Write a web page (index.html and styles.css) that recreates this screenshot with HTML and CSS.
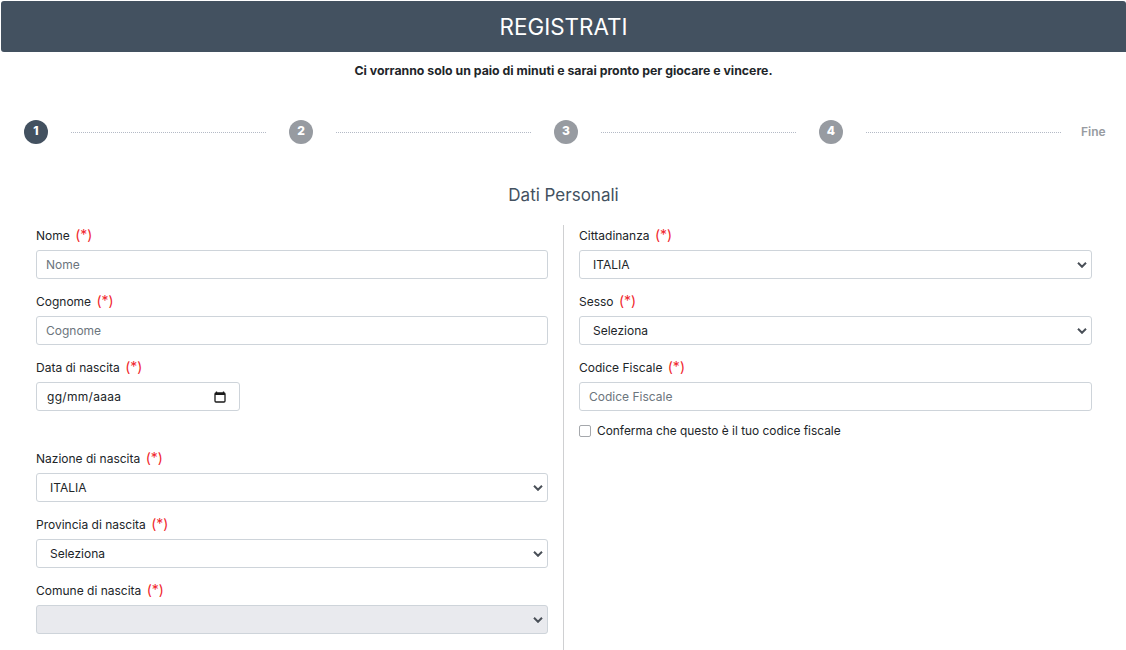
FILE: index.html
```html
<!DOCTYPE html>
<html lang="it">
<head>
<meta charset="utf-8">
<title>Registrati</title>
<link rel="stylesheet" href="styles.css">
</head>
<body>
<header class="banner"><h1>REGISTRATI</h1></header>
<p class="intro">Ci vorranno solo un paio di minuti e sarai pronto per giocare e vincere.</p>
<ol class="stepper">
  <li class="step active">1</li><li class="line"></li>
  <li class="step">2</li><li class="line"></li>
  <li class="step">3</li><li class="line"></li>
  <li class="step">4</li><li class="line"></li>
  <li class="end">Fine</li>
</ol>
<h2 class="section">Dati Personali</h2>
<form class="columns">
  <div class="col col-left">
    <div class="group"><label class="lbl">Nome <span class="req">(*)</span></label><input class="ctl" placeholder="Nome"></div>
    <div class="group"><label class="lbl">Cognome <span class="req">(*)</span></label><input class="ctl" placeholder="Cognome"></div>
    <div class="group group-date"><label class="lbl">Data di nascita <span class="req">(*)</span></label>
      <div class="ctl date"><span class="date-text">gg/mm/aaaa</span>
        <svg class="cal" viewBox="0 0 12 12" width="12" height="12" aria-hidden="true"><path d="M2.5 .5v1.5M9.5 .5v1.5" stroke="#1a1a1a" stroke-width="1.3" fill="none"/><rect x="1" y="2" width="10" height="9" rx="1" fill="none" stroke="#1a1a1a" stroke-width="1.3"/><rect x="1" y="2" width="10" height="2" fill="#1a1a1a"/></svg>
      </div>
    </div>
    <div class="group"><label class="lbl">Nazione di nascita <span class="req">(*)</span></label><select class="ctl sel"><option>ITALIA</option></select></div>
    <div class="group"><label class="lbl">Provincia di nascita <span class="req">(*)</span></label><select class="ctl sel"><option>Seleziona</option></select></div>
    <div class="group"><label class="lbl">Comune di nascita <span class="req">(*)</span></label><select class="ctl sel" disabled><option></option></select></div>
  </div>
  <div class="col col-right">
    <div class="group"><label class="lbl">Cittadinanza <span class="req">(*)</span></label><select class="ctl sel"><option>ITALIA</option></select></div>
    <div class="group"><label class="lbl">Sesso <span class="req">(*)</span></label><select class="ctl sel"><option>Seleziona</option></select></div>
    <div class="group"><label class="lbl">Codice Fiscale <span class="req">(*)</span></label><input class="ctl" placeholder="Codice Fiscale"></div>
    <label class="check"><input type="checkbox"><span class="check-text">Conferma che questo è il tuo codice fiscale</span></label>
  </div>
</form>
</body>
</html>
```
FILE: styles.css
```css
* { box-sizing: border-box; }
html, body { margin: 0; height: 650px; overflow: hidden; background: #fff; }
body { padding: 1px 0 0 1px; font-family: Inter, "Liberation Sans", sans-serif; color: #212529; font-size: 12px; }
.banner { height: 51px; background: #435160; border-radius: 3px 3px 0 3px; display: flex; align-items: center; justify-content: center; }
.banner h1 { margin: 0; color: #fff; font-size: 22.4px; font-weight: 400; }
.intro { margin: 0; padding-top: 11px; height: 68px; text-align: center; font-size: 12.3px; font-weight: 700; line-height: 16px; }
.stepper { list-style: none; margin: 0; padding: 0 18px 0 23px; display: flex; align-items: center; gap: 23.25px; height: 24px; }
.step { flex: none; width: 24px; height: 24px; border-radius: 50%; background: #979ba1; color: #fff; font-size: 12px; font-weight: 800; line-height: 22px; text-align: center; }
.step.active { background: #435160; }
.line { flex: 1; border-top: 1px dotted #b4bac6; }
.end { flex: none; width: 27px; color: #979ba1; font-weight: 600; font-size: 12px; line-height: 24px; height: 24px; margin-left: -3px; }
.section { margin: 0; padding-top: 39px; height: 81px; text-align: center; font-size: 17px; font-weight: 400; line-height: 24px; color: #435160; }
.columns { display: flex; height: 425px; }
.col-left { margin-left: 19px; padding: 0 15px 0 16px; border-right: 1px solid #cfd0d2; width: 544px; }
.col-right { padding: 0 15px; width: 543px; }
.group { margin-bottom: 12px; }
.group-date { margin-bottom: 37px; }
.group-date .ctl { width: 204px; }
.lbl { display: block; height: 21px; margin-bottom: 4px; line-height: 19px; font-size: 12px; color: #212529; }
.req { color: #f0262c; font-size: 14px; margin-left: 2px; font-weight: 400; }
.ctl { display: block; width: 100%; height: 29px; padding: 0 9px; border: 1px solid #ced4da; border-radius: 3px; background: #fff; font: 12px Inter, "Liberation Sans", sans-serif; color: #212529; outline: 0; }
.ctl::placeholder { color: #6c757d; opacity: 1; }
.sel { appearance: none; padding-left: 13px; background-repeat: no-repeat; background-position: right 4px center; background-size: 10px 6px; background-image: url("data:image/svg+xml,%3csvg xmlns='http://www.w3.org/2000/svg' viewBox='0 0 10 6'%3e%3cpath fill='none' stroke='%234a5058' stroke-width='2' d='M1 .8l4 4 4-4'/%3e%3c/svg%3e"); }
.sel:disabled { background-color: #e9eaee; opacity: 1; }
.date { display: flex; align-items: center; justify-content: space-between; padding: 0 13px 0 10px; }
.date-text { letter-spacing: .3px; }
.cal { flex: none; }
.check { display: flex; align-items: center; gap: 6px; margin-top: -3px; height: 20px; font-size: 12px; color: #212529; }
.check-text { font-size: 11.9px; }
.check input { margin: 1px 0 0; width: 12px; height: 12px; flex: none; appearance: none; border: 1px solid #a5a8ac; border-radius: 2px; background: #fff; }
```
